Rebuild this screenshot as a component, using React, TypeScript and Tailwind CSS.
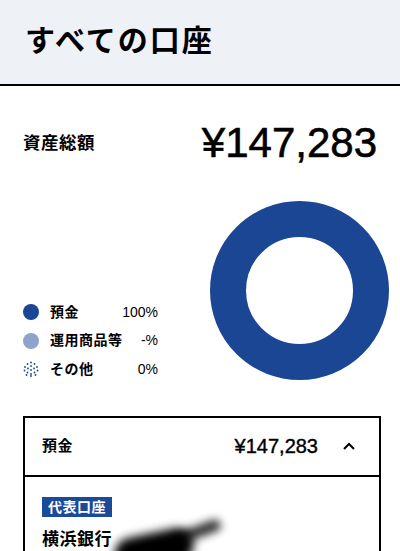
const jp = "font-['Liberation_Sans','Noto_Sans_CJK_JP',sans-serif]";

const Dotted = () => (
  <svg width="16" height="16" viewBox="0 0 16 16">
    {[
      [8, 1.5], [4.5, 3], [11.5, 3], [8, 5], [2, 6], [14, 6], [5, 7.5], [11, 7.5],
      [1.5, 9.5], [8, 9], [14.5, 9.5], [4.5, 11.5], [11.5, 11.5], [8, 13], [3.5, 14], [12.5, 14], [8, 15],
    ].map(([cx, cy], i) => (
      <circle key={i} cx={cx} cy={cy} r="0.9" fill="#1b4694" />
    ))}
  </svg>
);

const legend = [
  { label: "預金", value: "100%", dot: <span className="block h-4 w-4 rounded-full bg-[#1b4694]" /> },
  { label: "運用商品等", value: "-%", dot: <span className="block h-4 w-4 rounded-full bg-[#8fa3cc]" /> },
  { label: "その他", value: "0%", dot: <Dotted /> },
];

const App = () => {
  return (
    <div className={`${jp} h-[551px] overflow-hidden bg-white text-black`}>
      <div className="flex h-[86px] items-center border-b-2 border-black bg-[#eef1f6] pl-[25px] pb-[4px]">
        <h1 className="text-[30px] font-bold tracking-[2px]">すべての口座</h1>
      </div>

      <div className="px-[23px]">
        <div className="mt-[36px] flex h-[42px] items-center justify-between">
          <span className="text-[17.5px] font-bold tracking-[0.5px]">資産総額</span>
          <span className="text-[42px] leading-none [-webkit-text-stroke:0.6px_black]">¥147,283</span>
        </div>

        <div className="flex items-start">
          <div className="mt-[134px] w-[135px]">
            {legend.map((row) => (
              <div key={row.label} className="flex h-[28.5px] items-center">
                {row.dot}
                <span className="ml-[11px] text-[14px] font-bold tracking-[0.5px]">{row.label}</span>
                <span className="ml-auto text-[14px]">{row.value}</span>
              </div>
            ))}
          </div>
          <div className="ml-auto mr-[-12px] mt-[37px]">
            <svg width="179" height="179" viewBox="0 0 179 179">
              <circle cx="89.5" cy="89.5" r="71.5" fill="none" stroke="#1b4694" strokeWidth="36" />
            </svg>
          </div>
        </div>
      </div>

      <div className="ml-[23px] mt-[32px] w-[358px] border-2 border-black">
        <div className="flex h-[59px] items-center border-b-2 border-black pl-[17px] pr-[24px]">
          <span className="text-[15px] font-bold tracking-[0.5px]">預金</span>
          <span className="ml-auto text-[20px] [-webkit-text-stroke:0.4px_black]">¥147,283</span>
          <svg className="ml-[25px]" width="12" height="8" viewBox="0 0 12 8">
            <path d="M1 7 L6 2 L11 7" fill="none" stroke="black" strokeWidth="2" />
          </svg>
        </div>
        <div className="pl-[17px] pt-[18px] pb-4">
          <span className="inline-block h-[20px] bg-[#1b4a99] px-[6px] text-[14px] font-bold leading-[20px] tracking-[0.5px] text-white">
            代表口座
          </span>
          <div className="mt-[10px] flex h-[22px] items-center">
            <span className="text-[17px] font-bold leading-[22px] tracking-[0.5px]">横浜銀行</span>
            <span className="ml-[2px] h-[34px] w-[80px] shrink-0 translate-y-[10px] -rotate-12 rounded-full bg-black blur-[5px]" />
            <span className="-ml-[22px] h-[12px] w-[50px] shrink-0 -translate-y-[8px] -rotate-[20deg] rounded-full bg-black/80 blur-[4px]" />
          </div>
        </div>
      </div>
    </div>
  );
};

export default App;
